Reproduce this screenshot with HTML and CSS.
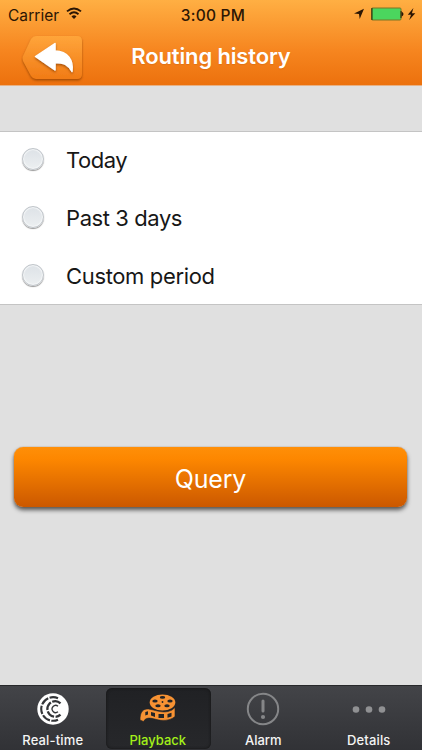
FILE: index.html
```html
<!DOCTYPE html>
<html lang="en">
<head>
<meta charset="utf-8">
<title>Routing history</title>
<link rel="stylesheet" href="styles.css">
</head>
<body>
<div class="screen">
  <header class="header">
    <div class="status">
      <div class="status-left"><span class="carrier">Carrier</span>
        <svg class="wifi" width="16" height="13" viewBox="0 0 16 13" fill="none" stroke="#2b1604" stroke-width="1.9"><path d="M1 4.4Q8-1.6 15 4.4M3.5 7.2Q8 3.3 12.5 7.2"/><path d="M5.5 9.4Q8 7.3 10.5 9.4L8 12Z" fill="#2b1604" stroke="none"/></svg>
      </div>
      <span class="clock">3:00 PM</span>
      <div class="status-right">
        <svg width="66" height="14" viewBox="0 0 66 14"><path d="M1 6.6 11 1.8 6.7 12 6 7Z" fill="#2b1604"/><rect x="18.5" y="1" width="29.5" height="12" rx="1" fill="#4bd65e" stroke="#7c7425"/><path d="M19 1V13M48 4V11" stroke="#2b2404"/><path d="M48.5 4.5Q52.5 7 48.5 9.8Z" fill="#2b1604"/><path d="M60.4 1 54.8 7.8H58L56.2 13 62.3 6.3H58.9Z" fill="#2b1604"/></svg>
      </div>
    </div>
    <div class="nav">
      <svg class="back" width="66" height="50" viewBox="0 0 66 50">
        <defs><linearGradient id="bg" x2="0" y2="1"><stop stop-color="#ffa53a"/><stop offset="1" stop-color="#f17b16"/></linearGradient>
        <filter id="sh" x="-20%" y="-20%" width="140%" height="150%"><feDropShadow dx="0" dy="1.5" stdDeviation=".8" flood-color="#8a3c00" flood-opacity=".75"/></filter></defs>
        <path d="M15 3H56Q61 3 61 8V41Q61 46 56 46H15Q12 46 10 43L2 28Q1 25 2 23L10 6Q12 3 15 3Z" fill="url(#bg)" filter="url(#sh)"/>
        <path d="M14.5 23.5 34 10.5V18C47 18.5 52.5 27 51 38.5 47 31.5 43 29.5 34 29.5V37Z" fill="#fff" stroke="#fff" stroke-width="1.5" stroke-linejoin="round" filter="url(#sh)"/>
      </svg>
      <h1 class="title">Routing history</h1>
    </div>
  </header>
  <main class="content">
    <div class="options">
      <label class="option"><span class="radio"></span><span class="today">Today</span></label>
      <label class="option"><span class="radio"></span><span class="past">Past 3 days</span></label>
      <label class="option"><span class="radio"></span><span class="custom">Custom period</span></label>
    </div>
    <button class="query">Query</button>
  </main>
  <nav class="tabs">
    <div class="tab first">
      <svg width="34" height="34" viewBox="0 0 34 34"><circle cx="17" cy="17" r="15.7" fill="#fff"/><g fill="none" stroke="#333538"><path d="M22 6.3A11.8 11.8 0 1 0 22 27.7" stroke-width="2.1" stroke-dasharray="8.6 1.4"/><path d="M24.5 11.3A7.8 7.8 0 1 0 24.5 22.7" stroke-width="2.3" stroke-dasharray="8.6 1.4"/><path d="M22 14.2A3.6 3.6 0 1 0 22 19.8" stroke-width="1.3"/></g></svg>
      <span class="realtime">Real-time</span>
    </div>
    <div class="tab active">
      <svg width="38" height="34" viewBox="0 0 38 34"><ellipse cx="23.5" cy="10.5" rx="12.8" ry="8" fill="#f79233"/><g fill="#232426"><ellipse cx="23.5" cy="5.4" rx="2.7" ry="1.4"/><ellipse cx="16" cy="9" rx="2.7" ry="1.6"/><ellipse cx="31" cy="9" rx="2.7" ry="1.6"/><ellipse cx="19" cy="13.7" rx="2.7" ry="1.5"/><ellipse cx="28" cy="13.7" rx="2.7" ry="1.5"/><circle cx="23.5" cy="10" r=".9"/></g><path d="M1 28C1 20 4 16.5 9.5 17 16 18 22 21 29 19.5Q33 19 36 15.5V24.5Q31 29 22 28.3C15 27.7 8 23 4.5 29.5Z" fill="#f79233" stroke="#232426" stroke-width=".6"/><path d="M6.3 20 9 19.3V22.6L6.3 23.4ZM12 20 16 21V25L12 23.6ZM19.5 22H25V26H19.5ZM28.5 22 32.5 20.8V24.5L28.5 25.7Z" fill="#232426"/></svg>
      <span class="playback">Playback</span>
    </div>
    <div class="tab">
      <svg width="36" height="34" viewBox="0 0 36 34"><g fill="none" stroke="#858688"><circle cx="18" cy="17" r="15.2" stroke-width="2"/><path d="M18 9V19" stroke-width="3" stroke-linecap="round"/></g><circle cx="18" cy="25" r="2.1" fill="#858688"/></svg>
      <span class="alarm">Alarm</span>
    </div>
    <div class="tab">
      <svg width="36" height="34" viewBox="0 0 36 34" fill="#909193"><circle cx="5" cy="17.5" r="3.3"/><circle cx="18" cy="17.5" r="3.3"/><circle cx="31" cy="17.5" r="3.3"/></svg>
      <span class="details">Details</span>
    </div>
  </nav>
</div>
</body>
</html>
```
FILE: styles.css
```css
* { box-sizing: border-box; }
body { margin: 0; font-family: Inter, "Liberation Sans", sans-serif; }
.screen { width: 422px; height: 750px; display: flex; flex-direction: column; background: #e0e0e0; overflow: hidden; }
.header { height: 86px; background: linear-gradient(#ffaf43, #f6851f 60%, #ec710d); border-bottom: 1px solid #e7b184; }
.status { height: 30px; display: grid; grid-template-columns: 1fr auto 1fr; align-items: center; padding: 0 6px 0 8px; color: #2b1604; }
.status-left { display: flex; align-items: center; gap: 7px; font-size: 15.5px; }
.carrier { letter-spacing: .05px; }
.wifi { margin-top: -4px; }
.clock { font-size: 15.5px; font-weight: 500; letter-spacing: .25px; padding-left: 2px; }
.status-right { display: flex; justify-content: flex-end; padding-bottom: 2px; margin-right: -3px; }
.nav { height: 55px; display: grid; grid-template-columns: 110px 1fr 110px; align-items: center; }
.back { margin-left: 21px; }
.title { margin: -3px 0 0; color: #fff; font-size: 22px; font-weight: 600; letter-spacing: -.15px; text-align: center; white-space: nowrap; text-shadow: 0 1px 1px #c85e0f66; }
.content { height: 599px; padding-top: 45px; }
.options { height: 174px; background: #fff; border-top: 1px solid #c4c4c4; border-bottom: 1px solid #c4c4c4; }
.option { height: 58px; display: flex; align-items: center; padding-left: 22px; gap: 22px; font-size: 22px; color: #171717; }
.option:first-child { margin-top: -1px; }
.today { letter-spacing: -.5px; }
.past { letter-spacing: -.42px; }
.custom { letter-spacing: -.35px; }
.radio { width: 22px; height: 22px; margin-top: -2px; border-radius: 50%; border: 1.5px solid #c0c5ca; background: linear-gradient(#dde2e7, #eceff1); box-shadow: 0 1px 1px #999, inset 0 0 1px 1px #f5f7f8; }
.query { display: block; width: 393px; height: 60px; margin: 142px 0 0 14px; padding: 3px 0 0; border: 0; border-radius: 9px; font: 25px Inter, sans-serif; letter-spacing: -.2px; color: #fff; background: linear-gradient(#ff8f08, #fd8700 20%, #cb5800); box-shadow: 0 0 1px #a65a16, 0 3px 4px #555; }
.tabs { height: 65px; display: grid; grid-template-columns: repeat(4, 1fr); border-top: 1px solid #28292b; background: linear-gradient(#434448, #313236); }
.tab { display: flex; flex-direction: column; align-items: center; padding-top: 6px; color: #f4f4f4; font-size: 13px; line-height: 16px; font-weight: 500; }
.tab svg { margin-left: -1px; }
.tab span { margin: 6px 0 0 -1px; }
.first { padding-left: 1px; }
.realtime { letter-spacing: .15px; }
.details { letter-spacing: .15px; }
.active { height: 61px; margin-top: 2px; padding-top: 4px; color: #a3ef19; border-radius: 6px; background: linear-gradient(#202124, #27282b); box-shadow: inset 0 0 3px #111; }
```
